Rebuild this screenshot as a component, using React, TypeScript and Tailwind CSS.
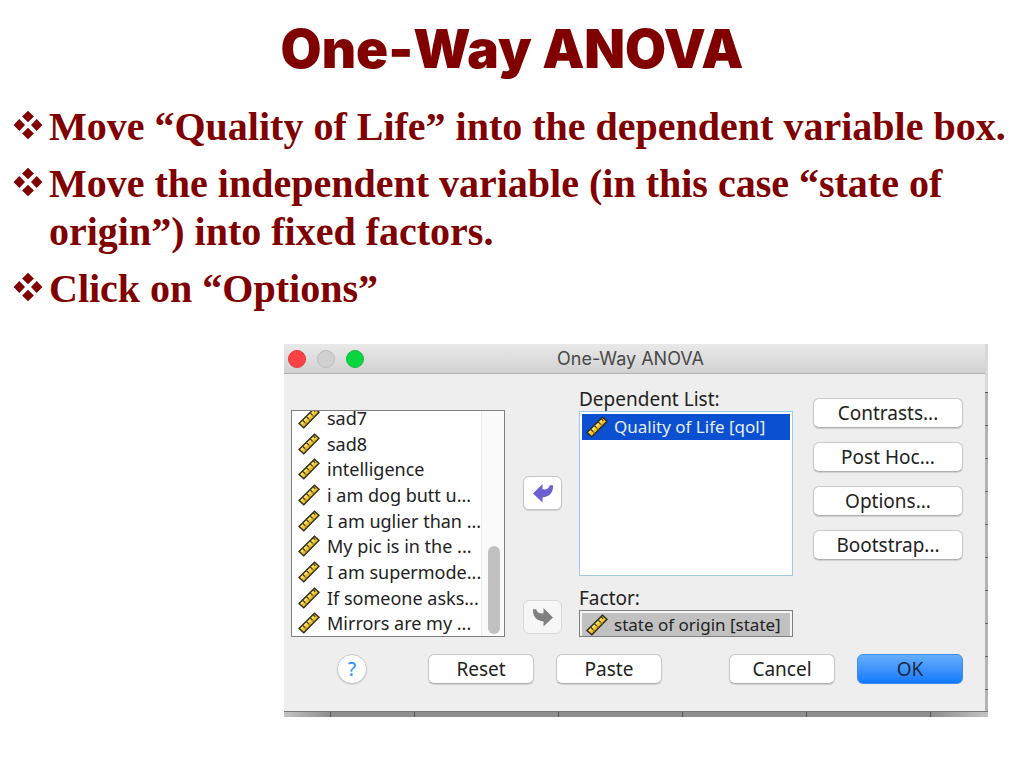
import React, { useState } from "react";
import clsx from "clsx";

const bullets = [
  "Move “Quality of Life” into the dependent variable box.",
  "Move the independent variable (in this case “state of origin”) into fixed factors.",
  "Click on “Options”",
];

const variables = [
  "sad7",
  "sad8",
  "intelligence",
  "i am dog butt u...",
  "I am uglier than ...",
  "My pic is in the ...",
  "I am supermode...",
  "If someone asks...",
  "Mirrors are my ...",
];

const sideActions = ["Contrasts...", "Post Hoc...", "Options...", "Bootstrap..."];

function DiamondBullet() {
  return (
    <svg viewBox="0 0 30 30" className="mt-[7px] h-[30px] w-[30px] shrink-0 fill-[#800000]" aria-hidden="true">
      <path d="M15 .8l5.9 5.7L15 12.2 9.1 6.5zM6.3 9.1l5.7 5.9-5.7 5.9L.6 15zM23.7 9.1l5.7 5.9-5.7 5.9-5.7-5.9zM15 17.8l5.9 5.7-5.9 5.7-5.9-5.7z" />
    </svg>
  );
}

function RulerIcon() {
  return (
    <svg viewBox="0 0 22 22" className="h-[22px] w-[22px] shrink-0" aria-hidden="true">
      <path d="M1 16.5L16.5 1.2 21 5.2 5.8 20.8z" fill="#f0c428" stroke="#2b2a20" strokeWidth="1.4" />
      <path d="M3.2 16.8L16.7 3.6" stroke="#fbe98a" strokeWidth="1.3" />
      <path d="M4.6 13.2l2.6 2.6M8.3 9.5l2.6 2.6M12 5.8l2.6 2.6M15.2 2.8l2 2" stroke="#4a431d" strokeWidth="1.3" />
      <path d="M7.2 17.6l1.5-1.5M11 13.8l1.5-1.5M14.8 10l1.5-1.5" stroke="#a57c12" strokeWidth="1.5" />
    </svg>
  );
}

function MoveArrow({ className }: { className?: string }) {
  return (
    <svg viewBox="0 0 22 20" className={clsx("h-5 w-[22px]", className)} fill="currentColor" aria-hidden="true">
      <path d="M1 10.5L10.5 1v5.3c3.6.6 6.3-.6 7.3-4.1H21c.6 6.8-3.4 11.8-10.5 12.2v5.2z" />
    </svg>
  );
}

function PushButton({ children, className }: { children: React.ReactNode; className?: string }) {
  return (
    <button
      type="button"
      className={clsx(
        "h-[30px] rounded-md border border-[#c8c8c8] border-b-[#b0b0b0] bg-white text-center text-[19px] leading-6 text-[#222] shadow-[0_1px_1px_#d0d0d0]",
        className
      )}
    >
      {children}
    </button>
  );
}

export default function App() {
  const [selected, setSelected] = useState(true);

  return (
    <main className="min-h-screen bg-white pt-[17px] text-[#800000]">
      <h1 className="text-center font-['Inter',sans-serif] text-[53px] leading-[64px] font-black">One-Way ANOVA</h1>

      <ul className="mt-[22px] space-y-[9px] pr-2 pl-[13px] font-['Liberation_Serif',serif] text-[40px] leading-[48px] font-bold">
        {bullets.map((text) => (
          <li key={text} className="flex gap-1.5">
            <DiamondBullet />
            <span>{text}</span>
          </li>
        ))}
      </ul>

      <div className="mt-[31px] flex justify-end pr-9 pb-12">
        <div className="w-[704px] bg-[#8e8e8e] font-['Noto_Sans',sans-serif] text-[19px] text-[#222]">
          <div className="flex">
            <section aria-label="One-Way ANOVA" className="flex-1 bg-[#eeeeee]">
              <header className="grid h-[30px] grid-cols-[1fr_auto_1fr] items-center border-b border-[#b0b0b0] bg-linear-to-b from-[#e9e9e9] to-[#d1d1d1] pr-2">
                <div className="flex gap-[11px] pl-1">
                  <button type="button" aria-label="Close" className="h-[18px] w-[18px] rounded-full border border-[#e0383a] bg-[#fc4145]" />
                  <button type="button" aria-label="Minimize" className="h-[18px] w-[18px] rounded-full border border-[#bcbcbc] bg-[#d0d0d0]" />
                  <button type="button" aria-label="Zoom" className="h-[18px] w-[18px] rounded-full border border-[#15b83a] bg-[#08d540]" />
                </div>
                <h2 className="font-['Inter',sans-serif] text-[18px] leading-6 text-[#484848]">One-Way ANOVA</h2>
              </header>

              <div className="flex pr-[22px] pl-[7px]">
                <div className="mt-[36px] flex h-[227px] w-[214px] overflow-hidden border border-[#808080] bg-white">
                  {/* scrolled to the end, so the first row is partly out of view */}
                  <div className="flex flex-1 items-end">
                    <ul role="listbox" aria-label="Variables" className="flex h-[231px] flex-1 flex-col">
                      {variables.map((name) => (
                        <li key={name} role="option" aria-selected={false} className="flex min-h-0 flex-1 items-center gap-[7px] pl-1.5 text-[18px] leading-6 whitespace-nowrap">
                          <RulerIcon />
                          {name}
                        </li>
                      ))}
                    </ul>
                  </div>
                  <div className="flex w-6 shrink-0 items-end justify-center border-l border-[#ececec] bg-[#fafafa] pb-0.5">
                    <div className="h-[88px] w-3 rounded-full bg-[#c1c1c1]" />
                  </div>
                </div>

                <div className="mt-[102px] ml-[18px] flex w-[39px] flex-col gap-[90px]">
                  <button type="button" aria-label="Remove from dependent list" className="flex h-[34px] items-center justify-center rounded-md border border-[#c4c4c4] bg-white text-[#6a60cf] shadow-[0_1px_1px_#d0d0d0]">
                    <MoveArrow />
                  </button>
                  <button type="button" aria-label="Move to factor" className="flex h-[34px] items-center justify-center rounded-md border border-[#d8d8d8] bg-[#f6f6f6] text-[#808080]">
                    <MoveArrow className="-scale-x-100" />
                  </button>
                </div>

                <div className="mt-[13px] ml-[17px] w-[214px]">
                  <h3 id="dependent" className="leading-6">Dependent List:</h3>
                  <ul role="listbox" aria-labelledby="dependent" className="h-[165px] border border-[#9ccbe6] bg-white p-0.5">
                    <li
                      role="option"
                      aria-selected={selected}
                      onClick={() => setSelected(!selected)}
                      className={clsx("flex h-[26px] items-center gap-1.5 pl-1 text-[17px] whitespace-nowrap", selected && "bg-[#0b50d0] text-[#e6eefb]")}
                    >
                      <RulerIcon />
                      Quality of Life [qol]
                    </li>
                  </ul>
                  <h3 id="factor" className="mt-[10px] leading-6">Factor:</h3>
                  <ul role="listbox" aria-labelledby="factor" className="h-[27px] overflow-hidden border border-[#808080] bg-[#f4f4f4] p-0.5 pb-0">
                    <li role="option" aria-selected={false} className="flex h-6 items-center gap-1.5 bg-[#c1c1c1] pl-1 text-[17px] leading-6 whitespace-nowrap">
                      <RulerIcon />
                      state of origin [state]
                    </li>
                  </ul>
                </div>

                <div className="mt-6 ml-5 flex flex-1 flex-col gap-[14px]">
                  {sideActions.map((label) => (
                    <PushButton key={label}>{label}</PushButton>
                  ))}
                </div>
              </div>

              <footer className="flex pt-[17px] pr-[22px] pb-[27px] pl-[53px]">
                <button type="button" aria-label="Help" className="h-[30px] w-[30px] rounded-full border border-[#c8c8c8] bg-white leading-6 font-medium text-[#3b99fc] shadow-[0_1px_1px_#d0d0d0]">
                  ?
                </button>
                <PushButton className="ml-[61px] w-[106px]">Reset</PushButton>
                <PushButton className="ml-[22px] w-[106px]">Paste</PushButton>
                <PushButton className="ml-auto w-[106px]">Cancel</PushButton>
                <button type="button" className="ml-[22px] h-[30px] w-[106px] rounded-md border border-[#3b8cf0] bg-linear-to-b from-[#64aefa] to-[#0f78fd] leading-6 text-[#1a2a44]">
                  OK
                </button>
              </footer>
            </section>

            {/* edge of the data sheet behind the dialog */}
            <div className="flex w-[3px] flex-col bg-[#b4b4b4]">
              <div className="h-[49px] border-b border-[#555] bg-[#d8d8d8]" />
              {Array.from({ length: 9 }, (_, i) => (
                <div key={i} className="h-[33px] border-b border-[#666]" />
              ))}
            </div>
          </div>
          <div className="flex h-1.5 border-t border-[#777]">
            <div className="w-[47px] border-r border-[#555] bg-linear-to-r from-[#c4c4c4] to-[#8e8e8e]" />
            <div className="w-[84px] border-r border-[#555]" />
            <div className="w-[144px] border-r border-[#555]" />
            <div className="w-[124px] border-r border-[#555]" />
            <div className="w-[124px] border-r border-[#555]" />
            <div className="w-[124px] border-r border-[#555]" />
            <div className="flex-1 bg-linear-to-r from-[#8e8e8e] to-[#c4c4c4]" />
          </div>
        </div>
      </div>
    </main>
  );
}
